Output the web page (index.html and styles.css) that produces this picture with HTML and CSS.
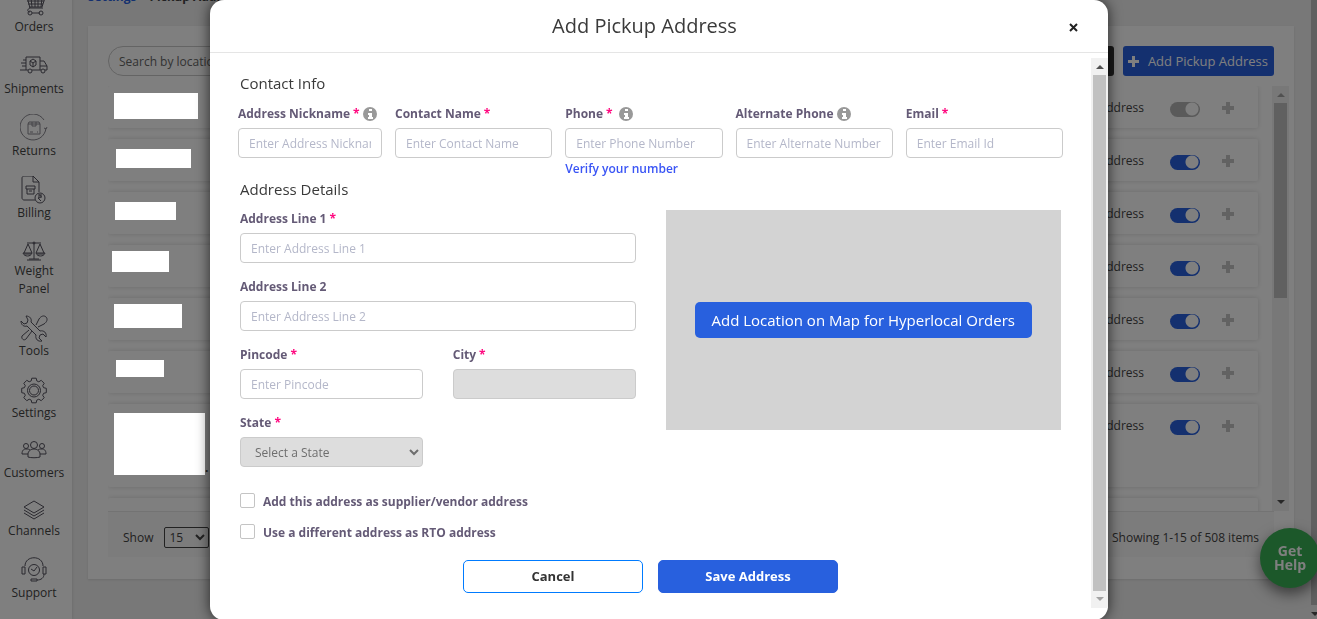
FILE: index.html
```html
<!DOCTYPE html>
<html lang="en">
<head>
    <meta charset="UTF-8">
    <meta name="viewport" content="width=device-width, initial-scale=1.0">
    <title>Add Pickup Address</title>
    <link rel="stylesheet" href="styles.css">
</head>
<body>

    <div class="page">
        <nav class="sidebar">
            <a href="#" class="nav-item">
                <svg class="nav-icon" width="28" height="28" viewBox="0 0 28 28"><path d="M3 3h3l4 15h13M7 8h18l-3 9H9M11 8l1 9M15 8v9M18 8v9M22 8l-1 9M7 11h17M8 14h15M10 18c-3 1-3 4 0 4M12 23h8"/><circle cx="10" cy="23" r="2"/><circle cx="21" cy="23" r="2"/></svg>
                Orders
            </a>
            <a href="#" class="nav-item">
                <svg class="nav-icon" width="28" height="28" viewBox="0 0 28 28"><path d="M6 5h14v13h-8M20 9h4l3 5v4h-2M21 18h-1M8 18H6V5M20 14h7M3 8h3M1 11h5M2 14h4M0 18h6M10 9l3-2 3 2v4l-3 2-3-2zM10 9l3 2 3-2M13 11v4"/><circle cx="10" cy="19" r="2"/><circle cx="23" cy="19" r="2"/></svg>
                Shipments
            </a>
            <a href="#" class="nav-item">
                <svg class="nav-icon thin" width="28" height="28" viewBox="0 0 28 28"><path d="M24 6A13 13 0 1 0 26 14M24 14l2 1 1-2M8 10h12v10H8zM8 10l1-2h10l1 2M12 8v4h4V8M10 18h3M17 18h1"/></svg>
                Returns
            </a>
            <a href="#" class="nav-item">
                <svg class="nav-icon" width="28" height="28" viewBox="0 0 28 28"><path d="M15 24H4c-1 0-2-1-2-2V2c0-1 1-2 2-2h9l6 6v10M13 0v6h6M6 10h9v3H6zM7 13v5h7v-5M9 15h3"/><circle cx="20" cy="22" r="5"/><path d="M18 19h4M18 21h4M19 19c3 0 3 3-1 3l3 3"/></svg>
                Billing
            </a>
            <a href="#" class="nav-item">
                <svg class="nav-icon" width="28" height="24" viewBox="0 0 28 24"><path d="M14 5v16M7 22h14M9 21h10M7 5h14M8 6L4 15M8 6l4 9M20 6l-4 9M20 6l4 9M3 15h9c-1 4-8 4-9 0zM16 15h9c-1 4-8 4-9 0zM4 16h7M17 16h7"/><circle cx="14" cy="5" r="1"/></svg>
                Weight<br>Panel
            </a>
            <a href="#" class="nav-item">
                <svg class="nav-icon" width="28" height="28" viewBox="0 0 28 28"><path d="M6 2c4 0 6 3 5 6l9 9c4-1 7 2 6 6l-3-3-3 1-1 3 3 3c-4 1-7-2-6-6l-9-9c-3 1-6-1-6-5l3 3 3-1 1-3zM16 11l3-6c2-3 5-4 7-2s1 5-2 7l-6 3M12 17l-6 8c-2 2-5 0-4-3l7-6"/></svg>
                Tools
            </a>
            <a href="#" class="nav-item">
                <svg class="nav-icon" width="28" height="28" viewBox="0 0 28 28"><path d="M23.600 11.700L26.300 12.300V16.700L23.600 17.300 22.700 19.300 24.200 21.700 21.200 24.700 18.800 23.200 16.800 24.100 16.200 26.800H11.800L11.200 24.100 9.200 23.200 6.800 24.700 3.800 21.700 5.300 19.300 4.400 17.300 1.700 16.700V12.300L4.400 11.700 5.300 9.700 3.800 7.300 6.800 4.300 9.200 5.800 11.200 4.900 11.800 2.200H16.200L16.800 4.900 18.800 5.800 21.200 4.300 24.200 7.300 22.700 9.700z"/><circle cx="14" cy="14.500" r="6.500"/><circle cx="14" cy="14.500" r="4.500"/></svg>
                Settings
            </a>
            <a href="#" class="nav-item">
                <svg class="nav-icon" width="28" height="26" viewBox="0 0 28 26"><circle cx="14" cy="7" r="3.500"/><circle cx="6" cy="8" r="2.500"/><circle cx="22" cy="8" r="2.500"/><path d="M8 19v-3c0-3 3-5 6-5s6 2 6 5v3c-3 1-9 1-12 0zM8 16H2c0-4 2-5 4-5 2 0 3 0 4 1M20 16h6c0-4-2-5-4-5-2 0-3 0-4 1"/></svg>
                Customers
            </a>
            <a href="#" class="nav-item">
                <svg class="nav-icon" width="28" height="24" viewBox="0 0 28 24"><path d="M14 3l10 6-10 6L4 9zM4 12l10 6 10-6M4 15l10 6 10-6"/></svg>
                Channels
            </a>
            <a href="#" class="nav-item">
                <svg class="nav-icon" width="28" height="28" viewBox="0 0 28 28"><path d="M5 10c0-11 18-11 18 0M2 11h3v7H2zM23 11h3v7h-3zM24 18c0 4-3 6-7 6M11 23h6v2h-6zM11 13l3 2 3-4"/><circle cx="14" cy="14" r="5.500"/></svg>
                Support
            </a>
        </nav>

        <main class="main">
            <div class="breadcrumb"><a href="#">Settings</a> <span class="sep">&gt;</span> Pickup Addresses</div>

            <div class="panel">
                <div class="toolbar">
                    <input type="text" class="search" placeholder="Search by location" aria-label="Search by location">
                    <div class="toolbar-actions">
                        <button type="button" class="btn-dark" aria-label="Filter"></button>
                        <button type="button" class="btn-add">
                            <svg width="11" height="11" viewBox="0 0 11 11"><path d="M4 0h3v4h4v3H7v4H4V7H0V4h4z"/></svg>
                            Add Pickup Address
                        </button>
                    </div>
                </div>

                <div class="list-wrap">
                    <div class="list">
                        <div class="row">
                            <span class="mask mask-1"></span>
                            <span class="row-link">Edit Address</span>
                            <input type="checkbox" class="toggle" aria-label="Active" disabled>
                            <svg class="plus" width="12" height="12" viewBox="0 0 12 12"><path d="M4 0h4v4h4v4H8v4H4V8H0V4h4z"/></svg>
                        </div>
                        <div class="row">
                            <span class="mask mask-2"></span>
                            <span class="row-link">Edit Address</span>
                            <input type="checkbox" class="toggle" aria-label="Active" checked>
                            <svg class="plus" width="12" height="12" viewBox="0 0 12 12"><path d="M4 0h4v4h4v4H8v4H4V8H0V4h4z"/></svg>
                        </div>
                        <div class="row">
                            <span class="mask mask-3"></span>
                            <span class="row-link">Edit Address</span>
                            <input type="checkbox" class="toggle" aria-label="Active" checked>
                            <svg class="plus" width="12" height="12" viewBox="0 0 12 12"><path d="M4 0h4v4h4v4H8v4H4V8H0V4h4z"/></svg>
                        </div>
                        <div class="row">
                            <span class="mask mask-4"></span>
                            <span class="row-link">Edit Address</span>
                            <input type="checkbox" class="toggle" aria-label="Active" checked>
                            <svg class="plus" width="12" height="12" viewBox="0 0 12 12"><path d="M4 0h4v4h4v4H8v4H4V8H0V4h4z"/></svg>
                        </div>
                        <div class="row">
                            <span class="mask mask-5"></span>
                            <span class="row-link">Edit Address</span>
                            <input type="checkbox" class="toggle" aria-label="Active" checked>
                            <svg class="plus" width="12" height="12" viewBox="0 0 12 12"><path d="M4 0h4v4h4v4H8v4H4V8H0V4h4z"/></svg>
                        </div>
                        <div class="row">
                            <span class="mask mask-6"></span>
                            <span class="row-link">Edit Address</span>
                            <input type="checkbox" class="toggle" aria-label="Active" checked>
                            <svg class="plus" width="12" height="12" viewBox="0 0 12 12"><path d="M4 0h4v4h4v4H8v4H4V8H0V4h4z"/></svg>
                        </div>
                        <div class="row row-tall">
                            <span class="mask mask-7"></span>
                            <b class="dot">.</b>
                            <span class="row-link">Edit Address</span>
                            <input type="checkbox" class="toggle" aria-label="Active" checked>
                            <svg class="plus" width="12" height="12" viewBox="0 0 12 12"><path d="M4 0h4v4h4v4H8v4H4V8H0V4h4z"/></svg>
                        </div>
                        <div class="row"></div>
                    </div>
                    <div class="scrollbar list-scroll">
                        <span class="arrow-up"></span>
                        <span class="thumb"></span>
                        <span class="arrow-down"></span>
                    </div>
                </div>

                <div class="pager">
                    <label for="page-size">Show</label>
                    <select id="page-size" class="page-size">
                        <option>15</option>
                        <option>30</option>
                        <option>60</option>
                    </select>
                    <span class="showing">Showing 1-15 of 508 items</span>
                </div>
            </div>
        </main>

        <div class="page-scroll"><span class="arrow-down"></span></div>
        <button type="button" class="get-help">Get<br>Help</button>
    </div>

    <div class="backdrop"></div>

    <div class="modal-wrap">
        <div class="modal" role="dialog" aria-labelledby="modal-title">
            <div class="modal-header">
                <h1 id="modal-title">Add Pickup Address</h1>
                <button type="button" class="close" aria-label="Close">
                    <svg width="9" height="9" viewBox="0 0 9 9"><path d="M1 1l7 7M8 1L1 8"/></svg>
                </button>
            </div>

            <div class="modal-body">
                <form class="form">
                    <h2>Contact Info</h2>
                    <div class="contact-row">
                        <div class="field nickname">
                            <label for="nickname">Address Nickname <i>*</i>
                                <svg class="info" width="14" height="14" viewBox="0 0 14 14"><circle cx="7" cy="7" r="7"/><path d="M6 2h3v2H6zM5 6h4v4h1v2H5v-2h1V8H5z"/></svg>
                            </label>
                            <input type="text" id="nickname" placeholder="Enter Address Nickname">
                        </div>
                        <div class="field">
                            <label for="contact">Contact Name <i>*</i></label>
                            <input type="text" id="contact" placeholder="Enter Contact Name">
                        </div>
                        <div class="field">
                            <label for="phone">Phone <i>*</i>
                                <svg class="info info-gap" width="14" height="14" viewBox="0 0 14 14"><circle cx="7" cy="7" r="7"/><path d="M6 2h3v2H6zM5 6h4v4h1v2H5v-2h1V8H5z"/></svg>
                            </label>
                            <input type="tel" id="phone" placeholder="Enter Phone Number">
                            <a href="#" class="verify">Verify your number</a>
                        </div>
                        <div class="field">
                            <label for="alt-phone">Alternate Phone
                                <svg class="info" width="14" height="14" viewBox="0 0 14 14"><circle cx="7" cy="7" r="7"/><path d="M6 2h3v2H6zM5 6h4v4h1v2H5v-2h1V8H5z"/></svg>
                            </label>
                            <input type="tel" id="alt-phone" placeholder="Enter Alternate Number">
                        </div>
                        <div class="field">
                            <label for="email">Email <i>*</i></label>
                            <input type="email" id="email" placeholder="Enter Email Id">
                        </div>
                    </div>

                    <h2>Address Details</h2>
                    <div class="address-cols">
                        <div class="address-fields">
                            <div class="field wide">
                                <label for="line1">Address Line 1 <i>*</i></label>
                                <input type="text" id="line1" placeholder="Enter Address Line 1">
                            </div>
                            <div class="field wide">
                                <label for="line2">Address Line 2</label>
                                <input type="text" id="line2" placeholder="Enter Address Line 2">
                            </div>
                            <div class="field">
                                <label for="pincode">Pincode <i>*</i></label>
                                <input type="text" id="pincode" placeholder="Enter Pincode">
                            </div>
                            <div class="field">
                                <label for="city">City <i>*</i></label>
                                <input type="text" id="city" disabled>
                            </div>
                            <div class="field">
                                <label for="state">State <i>*</i></label>
                                <select id="state" disabled>
                                    <option>Select a State</option>
                                </select>
                            </div>
                        </div>
                        <div class="map">
                            <button type="button" class="btn-map">Add Location on Map for Hyperlocal Orders</button>
                        </div>
                    </div>

                    <div class="checks">
                        <label class="check"><input type="checkbox"> Add this address as supplier/vendor address</label>
                        <label class="check"><input type="checkbox"> Use a different address as RTO address</label>
                    </div>

                    <div class="actions">
                        <button type="button" class="btn btn-cancel">Cancel</button>
                        <button type="submit" class="btn btn-save">Save Address</button>
                    </div>
                </form>
                <div class="scrollbar modal-scroll">
                    <span class="arrow-up"></span>
                    <span class="thumb"></span>
                    <span class="arrow-down"></span>
                </div>
            </div>
        </div>
    </div>

</body>
</html>
```

FILE: styles.css
```css
* {
    box-sizing: border-box;
}
body {
    margin: 0;
    height: 100vh;
    overflow: hidden;
    font-family: "Open Sans", "Noto Sans", sans-serif;
    font-size: 12px;
    line-height: 18px;
    color: #444;
    background-color: #f0f0f0;
}
button, input, select {
    font-family: inherit;
    font-size: 12px;
}
button {
    cursor: pointer;
}
a {
    text-decoration: none;
}
.page {
    display: flex;
    height: 100vh;
    overflow: hidden;
}

/* sidebar */
.sidebar {
    display: flex;
    flex-direction: column;
    flex: none;
    gap: 16px;
    width: 72px;
    margin-top: -10px;
    background-color: #fff;
    box-shadow: 0 0 3px rgba(0, 0, 0, 0.15);
}
.nav-item {
    display: flex;
    flex-direction: column;
    align-items: center;
    padding-right: 4px;
    text-align: center;
    color: #444;
}
.nav-icon {
    fill: none;
    stroke: #55535f;
    stroke-width: 1;
    stroke-linejoin: round;
}
.thin {
    stroke: #8a8890;
}

/* main panel */
.main {
    flex: 1;
    min-width: 0;
    margin-top: -12px;
    padding: 0 17px 0 16px;
}
.breadcrumb {
    height: 38px;
    font-size: 12px;
    font-weight: 700;
}
.breadcrumb a {
    color: #2860de;
}
.sep {
    visibility: hidden;
}
.panel {
    padding: 20px 20px 22px;
    background-color: #fff;
    box-shadow: 0 1px 2px rgba(0, 0, 0, 0.1);
}
.toolbar {
    display: flex;
    justify-content: space-between;
    margin-bottom: 10px;
}
.search {
    width: 240px;
    height: 30px;
    padding: 0 10px;
    border: 1px solid #c8c8c8;
    border-radius: 15px;
    background: none;
}
.search::placeholder {
    color: #666;
}
.toolbar-actions {
    display: flex;
    gap: 9px;
}
.btn-dark {
    width: 90px;
    border: none;
    border-radius: 3px;
    background-color: #333;
}
.btn-add {
    display: flex;
    align-items: center;
    gap: 9px;
    height: 30px;
    padding: 0 6px 0 5px;
    border: none;
    border-radius: 3px;
    font-size: 13px;
    color: #fff;
    background-color: #2860de;
}
.btn-add svg {
    fill: #fff;
}
.list-wrap {
    display: flex;
    justify-content: space-between;
    height: 425px;
    margin-right: -15px;
    overflow: hidden;
}
.list {
    display: flex;
    flex: 1;
    flex-direction: column;
    gap: 11px;
    margin-right: 14px;
}
.row {
    display: flex;
    flex: none;
    height: 42px;
    padding-right: 24px;
    border-radius: 2px;
    background-color: #fff;
    box-shadow: 0 0 5px rgba(0, 0, 0, 0.15);
}
.row-tall {
    height: 83px;
}
.row-link {
    margin: 13px 26px 0 auto;
}
.dot {
    align-self: flex-end;
    margin-bottom: 10px;
}
.toggle {
    appearance: none;
    width: 30px;
    height: 15px;
    margin: 16px 22px 0 0;
    border-radius: 8px;
    background: radial-gradient(circle at 22px 7px, #fff 6px, transparent 7px) #b5b5b5;
}
.toggle:checked {
    background-color: #2860de;
}
.plus {
    margin-top: 16px;
    fill: #c4c4c4;
}

/* blanked out nicknames */
.mask {
    position: relative;
    z-index: 11;
    background-color: #fff;
}
.mask-1 {
    width: 84px;
    height: 26px;
    margin: 7px 0 0 6px;
}
.mask-2 {
    width: 75px;
    height: 19px;
    margin: 10px 0 0 8px;
}
.mask-3 {
    width: 61px;
    height: 18px;
    margin: 10px 0 0 7px;
}
.mask-4 {
    width: 57px;
    height: 21px;
    margin: 6px 0 0 4px;
}
.mask-5 {
    width: 68px;
    height: 24px;
    margin: 6px 0 0 6px;
}
.mask-6 {
    width: 48px;
    height: 17px;
    margin: 9px 0 0 8px;
}
.mask-7 {
    width: 91px;
    height: 62px;
    margin: 9px 0 0 6px;
}
.pager {
    display: flex;
    align-items: center;
    height: 46px;
    padding: 6px 15px 0;
    border-top: 1px solid #e6e6e6;
    background-color: #f8f8f8;
}
.page-size {
    width: 45px;
    height: 21px;
    margin-left: 11px;
    border: 1px solid #444;
    border-radius: 2px;
    color: #444;
    background: none;
}
.showing {
    margin-left: auto;
}

/* scrollbars */
.scrollbar {
    display: flex;
    flex-direction: column;
    align-items: center;
    flex: none;
    gap: 6px;
    width: 17px;
    padding: 7px 0;
    background-color: #f1f1f1;
}
.thumb {
    flex: 1;
    width: 13px;
    background-color: #c1c1c1;
}
.list-scroll .thumb {
    flex: none;
    height: 195px;
    margin-bottom: auto;
}
.arrow-up {
    border: 4px solid transparent;
    border-top: none;
    border-bottom-color: #505050;
}
.list-scroll .arrow-up {
    border-bottom-color: #a3a3a3;
}
.arrow-down {
    border: 4px solid transparent;
    border-bottom: none;
    border-top-color: #505050;
}
.page-scroll {
    display: flex;
    align-items: flex-end;
    flex: none;
    width: 6px;
    height: 100vh;
    padding-bottom: 3px;
    background: linear-gradient(to top, #f1f1f1 14px, #c1c1c1 14px);
}
.get-help {
    position: fixed;
    right: -3px;
    bottom: 31px;
    width: 60px;
    height: 60px;
    border: none;
    border-radius: 50%;
    font-size: 14px;
    font-weight: 700;
    line-height: 14px;
    color: #fff;
    background-color: #38b054;
    box-shadow: 0 6px 14px rgba(0, 0, 0, 0.5);
}

/* modal */
.backdrop {
    position: fixed;
    inset: 0;
    z-index: 10;
    background-color: rgba(0, 0, 0, 0.5);
}
.modal-wrap {
    position: fixed;
    inset: 0;
    z-index: 12;
    padding: 0 209px 0 210px;
}
.modal {
    border-radius: 14px;
    background-color: #fff;
    box-shadow: 0 0 14px rgba(0, 0, 0, 0.7);
}
.modal-header {
    display: flex;
    align-items: center;
    height: 53px;
    padding: 0 30px;
    border-bottom: 1px solid #e5e5e5;
}
.modal-header h1 {
    flex: 1;
    margin: 0;
    font-size: 20px;
    font-weight: 500;
    line-height: 28px;
    text-align: center;
    color: #3a3a3a;
}
.close {
    width: 29px;
    padding: 2px 0 0;
    border: none;
    text-align: right;
    background: none;
}
.close svg {
    fill: none;
    stroke: #222;
    stroke-width: 2;
}
.modal-body {
    display: flex;
    justify-content: space-between;
}
.form {
    flex: 1;
    padding: 20px 30px 27px;
}
.form h2 {
    margin: 0 0 10px;
    font-size: 15px;
    font-weight: 500;
    line-height: 20px;
    color: #3a3a3a;
}
.contact-row {
    display: grid;
    grid-template-columns: 144px repeat(4, 1fr);
    gap: 13px;
    margin: 11px -2px 1px;
}
.field label {
    display: flex;
    align-items: center;
    gap: 3px;
    margin-bottom: 4px;
    font-weight: 700;
    line-height: 20px;
    white-space: nowrap;
    color: #645a76;
}
.field i {
    font-style: normal;
    color: #ff0a80;
}
.info {
    fill: #999;
}
.info path {
    fill: #fff;
}
.info-gap {
    margin-left: 3px;
}
.field input, .field select {
    display: block;
    width: 100%;
    height: 30px;
    padding: 0 10px;
    border: 1px solid #cbcbcb;
    border-radius: 4px;
    color: #444;
    background-color: #fff;
}
.field input::placeholder {
    color: #b4b7c9;
}
.field input:disabled, .field select:disabled {
    color: #6e6e6e;
    background-color: #ddd;
    opacity: 1;
}
.verify {
    display: block;
    margin-top: 2px;
    font-weight: 600;
    color: #3a55f5;
}
.address-cols {
    display: grid;
    grid-template-columns: 1fr 1fr;
    gap: 30px;
}
.address-fields {
    display: grid;
    grid-template-columns: 1fr 1fr;
    gap: 14px 30px;
}
.wide {
    grid-column: span 2;
}
.map {
    display: flex;
    align-items: center;
    justify-content: center;
    height: 220px;
    margin-top: 1px;
    background-color: #d3d3d3;
}
.btn-map {
    height: 36px;
    padding: 0 17px;
    border: none;
    border-radius: 5px;
    font-size: 15px;
    white-space: nowrap;
    color: #fff;
    background-color: #2860de;
}
.checks {
    display: flex;
    flex-direction: column;
    align-items: flex-start;
    gap: 11px;
    margin-top: 25px;
}
.check {
    display: flex;
    align-items: center;
    gap: 8px;
    font-weight: 700;
    line-height: 20px;
    color: #645a76;
}
.check input {
    appearance: none;
    width: 15px;
    height: 15px;
    margin: 0 0 4px;
    border: 1px solid #c4c4c4;
    border-radius: 2px;
}
.actions {
    display: flex;
    justify-content: center;
    gap: 15px;
    margin-top: 17px;
}
.btn {
    width: 180px;
    height: 33px;
    padding: 0 0 2px;
    border: 1px solid #2860de;
    border-radius: 5px;
    font-size: 13px;
    font-weight: 700;
}
.btn-cancel {
    border-color: #007bff;
    color: #333;
    background-color: #fff;
}
.btn-save {
    color: #fff;
    background-color: #2860de;
}
.modal-scroll {
    margin: 5px 0 12px;
}
.modal-scroll .arrow-down {
    border-top-color: #a3a3a3;
}
```
